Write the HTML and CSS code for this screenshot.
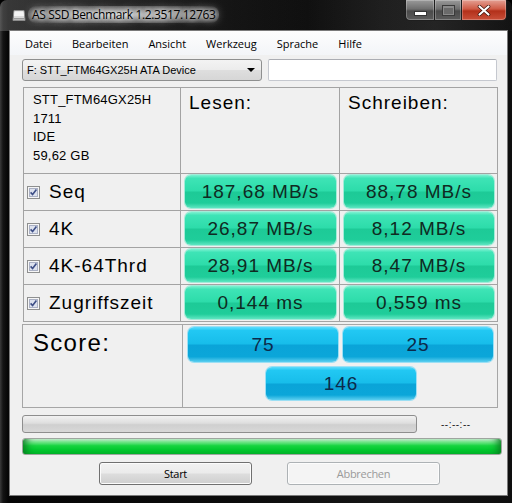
FILE: index.html
```html
<!DOCTYPE html>
<html lang="de">
<head>
<meta charset="utf-8">
<title>AS SSD Benchmark</title>
<link rel="stylesheet" href="styles.css">
</head>
<body>
<div class="window">
  <div class="titlebar">
    <svg class="app-icon" width="14" height="13" viewBox="0 0 14 13">
      <path d="M2 1.5 H12 L13 11.5 H1 Z" fill="#d9d9d9" stroke="#8c8c8c"/>
      <path d="M2.5 2.5 H11.5 L12 7 H2 Z" fill="#f4f4f4"/>
      <rect x="2" y="9" width="10" height="1.5" fill="#9a9a9a"/>
    </svg>
    <span class="title">AS SSD Benchmark 1.2.3517.12763</span>
    <div class="caps">
      <div class="cap cap-min"><span class="glyph-min"></span></div>
      <div class="cap cap-max"><span class="glyph-max"></span></div>
      <div class="cap cap-close">
        <svg width="14" height="11" viewBox="0 0 14 11"><path d="M2.5 1.5 L11.5 9.5 M11.5 1.5 L2.5 9.5" stroke="#3a1008" stroke-width="3.6" stroke-linecap="round"/><path d="M2.5 1.5 L11.5 9.5 M11.5 1.5 L2.5 9.5" stroke="#fff" stroke-width="2.2" stroke-linecap="round"/></svg>
      </div>
    </div>
  </div>
  <div class="client">
    <div class="menubar">
      <span>Datei</span><span>Bearbeiten</span><span>Ansicht</span><span>Werkzeug</span><span>Sprache</span><span>Hilfe</span>
    </div>
    <div class="drive-row">
      <div class="combo"><span>F: STT_FTM64GX25H ATA Device</span><span class="combo-arrow"></span></div>
      <div class="textbox"></div>
    </div>
    <div class="results">
      <div class="cell info">STT_FTM64GX25H<br>1711<br>IDE<br>59,62 GB</div>
      <div class="cell head">Lesen:</div>
      <div class="cell head">Schreiben:</div>

      <div class="cell label"><svg class="check" width="13" height="13" viewBox="0 0 13 13"><rect x="0.5" y="0.5" width="12" height="12" fill="#f6f6f6" stroke="#8e8f8f"/><rect x="2.5" y="2.5" width="8" height="8" fill="#dde2ee" stroke="#aab0c4"/><path d="M3.6 6.4 L5.6 8.6 L9.4 3.6" stroke="#3d4e86" stroke-width="1.6" fill="none"/></svg>Seq</div>
      <div class="cell val"><div class="bar green">187,68 MB/s</div></div>
      <div class="cell val"><div class="bar green">88,78 MB/s</div></div>

      <div class="cell label"><svg class="check" width="13" height="13" viewBox="0 0 13 13"><rect x="0.5" y="0.5" width="12" height="12" fill="#f6f6f6" stroke="#8e8f8f"/><rect x="2.5" y="2.5" width="8" height="8" fill="#dde2ee" stroke="#aab0c4"/><path d="M3.6 6.4 L5.6 8.6 L9.4 3.6" stroke="#3d4e86" stroke-width="1.6" fill="none"/></svg>4K</div>
      <div class="cell val"><div class="bar green">26,87 MB/s</div></div>
      <div class="cell val"><div class="bar green">8,12 MB/s</div></div>

      <div class="cell label"><svg class="check" width="13" height="13" viewBox="0 0 13 13"><rect x="0.5" y="0.5" width="12" height="12" fill="#f6f6f6" stroke="#8e8f8f"/><rect x="2.5" y="2.5" width="8" height="8" fill="#dde2ee" stroke="#aab0c4"/><path d="M3.6 6.4 L5.6 8.6 L9.4 3.6" stroke="#3d4e86" stroke-width="1.6" fill="none"/></svg>4K-64Thrd</div>
      <div class="cell val"><div class="bar green">28,91 MB/s</div></div>
      <div class="cell val"><div class="bar green">8,47 MB/s</div></div>

      <div class="cell label"><svg class="check" width="13" height="13" viewBox="0 0 13 13"><rect x="0.5" y="0.5" width="12" height="12" fill="#f6f6f6" stroke="#8e8f8f"/><rect x="2.5" y="2.5" width="8" height="8" fill="#dde2ee" stroke="#aab0c4"/><path d="M3.6 6.4 L5.6 8.6 L9.4 3.6" stroke="#3d4e86" stroke-width="1.6" fill="none"/></svg>Zugriffszeit</div>
      <div class="cell val"><div class="bar green">0,144 ms</div></div>
      <div class="cell val"><div class="bar green">0,559 ms</div></div>
    </div>
    <div class="score">
      <div class="cell score-label">Score:</div>
      <div class="cell score-vals">
        <div class="score-row">
          <div class="bar blue">75</div>
          <div class="bar blue">25</div>
        </div>
        <div class="score-row total">
          <div class="bar blue">146</div>
        </div>
      </div>
    </div>
    <div class="progress-row">
      <div class="progress gray"></div>
      <span class="time">--:--:--</span>
    </div>
    <div class="progress green-bar"></div>
    <div class="buttons">
      <div class="btn">Start</div>
      <div class="btn disabled">Abbrechen</div>
    </div>
  </div>
</div>
</body>
</html>
```
FILE: styles.css
```css
html, body {
  margin: 0;
  padding: 0;
  background: #000;
}

body {
  font-family: "Liberation Sans", Arial, sans-serif;
  color: #000;
}

.window {
  width: 512px;
  height: 503px;
  display: flex;
  flex-direction: column;
  background: linear-gradient(to right, #3a3a3a 0, #141414 3px, #050505 8px, #0b0b0b 45%, #151515 75%, #0e0e0e 100%);
  border-radius: 7px 7px 0 0;
  overflow: hidden;
}

/* title bar */
.titlebar {
  height: 31px;
  flex: none;
  display: flex;
  align-items: flex-start;
  padding-left: 12px;
  background: linear-gradient(to right, rgba(120,120,120,0.45), rgba(60,60,60,0.2) 45%, rgba(0,0,0,0) 60%, rgba(90,90,90,0.25) 85%, rgba(40,40,40,0.2));
}

.app-icon {
  margin-top: 9px;
  flex: none;
}

.title {
  margin-left: 2px;
  margin-top: 6px;
  padding: 0 4px;
  font-family: "Open Sans", "Liberation Sans", sans-serif;
  font-size: 12px;
  letter-spacing: -0.35px;
  color: #000;
  border-radius: 8px;
  background: radial-gradient(ellipse at center, rgba(235,235,235,0.75) 0%, rgba(200,200,200,0.45) 55%, rgba(120,120,120,0) 100%);
  text-shadow: 0 0 4px #fff, 0 0 8px #f0f0f0, 0 0 12px #d8d8d8;
}

.caps {
  margin-left: auto;
  margin-right: 5px;
  display: flex;
}

.cap {
  height: 21px;
  box-sizing: border-box;
  border: 1px solid #1e1e1e;
  border-top: none;
  display: flex;
  align-items: center;
  justify-content: center;
  box-shadow: inset 0 0 0 1px rgba(255,255,255,0.25);
}

.cap-min {
  width: 29px;
  border-radius: 0 0 0 5px;
  border-right: none;
  background: linear-gradient(#9a9a9a, #6e6e6e 45%, #4a4a4a 55%, #5c5c5c);
}

.cap-max {
  width: 27px;
  border-right: none;
  background: linear-gradient(#9a9a9a, #6e6e6e 45%, #4a4a4a 55%, #5c5c5c);
}

.cap-close {
  width: 46px;
  border-radius: 0 0 5px 0;
  background: linear-gradient(#e4a093, #cf5a45 45%, #b3301a 55%, #c9503a);
}

.glyph-min {
  width: 11px;
  height: 3px;
  margin-top: 6px;
  background: #fff;
  border: 1px solid #333;
}

.glyph-max {
  width: 9px;
  height: 6px;
  border: 1px solid #8a8a8a;
  border-top-width: 2px;
  background: #6a6a6a;
  box-shadow: 0 0 0 1px #3a3a3a;
}

/* client */
.client {
  margin: 0 5px 8px 10px;
  height: 464px;
  flex: none;
  background: #f0f0f0;
  display: flex;
  flex-direction: column;
  box-shadow: 0 0 0 1px #7a7a7a;
}

.menubar {
  height: 24px;
  flex: none;
  display: flex;
  align-items: center;
  padding-left: 5px;
  background: linear-gradient(#fdfdfd, #f3f5f8);
  font-family: "Open Sans", "Liberation Sans", sans-serif;
  font-size: 11px;
}

.menubar span {
  padding: 0 10px;
}

.drive-row {
  display: flex;
  gap: 6px;
  margin: 4px 0 0 12px;
  height: 22px;
}

.combo {
  width: 240px;
  box-sizing: border-box;
  border: 1px solid #8e8f8f;
  border-radius: 3px;
  background: linear-gradient(#f3f3f3, #ececec 48%, #dedede 52%, #d6d6d6);
  display: flex;
  align-items: center;
  justify-content: space-between;
  padding: 0 6px 0 4px;
  font-size: 11px;
}

.combo-arrow {
  width: 0;
  height: 0;
  border-left: 4px solid transparent;
  border-right: 4px solid transparent;
  border-top: 4px solid #000;
}

.textbox {
  width: 229px;
  box-sizing: border-box;
  background: #fff;
  border: 1px solid #c5c8cf;
  border-top-color: #abadb3;
  border-radius: 2px;
}

/* results table */
.results {
  align-self: flex-start;
  margin: 6px 0 0 13px;
  display: grid;
  grid-template-columns: 156px 158px 157px;
  grid-template-rows: 85px repeat(4, 36px);
  gap: 1px;
  padding: 1px;
  background: #a3a3a3;
}

.cell {
  background: #f0f0f0;
}

.info {
  padding: 3px 0 0 9px;
  font-size: 13px;
  line-height: 18.6px;
  letter-spacing: 0.2px;
}

.head {
  padding: 4px 0 0 8px;
  font-size: 19px;
  letter-spacing: 1px;
}

.label {
  display: flex;
  align-items: center;
  gap: 9px;
  padding-left: 3px;
  font-size: 19px;
  letter-spacing: 1px;
}

.check {
  flex: none;
}

.val {
  display: flex;
  padding: 1px 3px 2px 4px;
}

.bar {
  border-radius: 6px;
  display: flex;
  align-items: center;
  justify-content: center;
  font-size: 19px;
  letter-spacing: 1px;
}

.bar.green {
  flex: 1;
  color: #0f2a22;
  background: linear-gradient(#7ef2d2 0%, #3ee4b6 10%, #2ddcaa 48%, #1dca97 52%, #1fcd9a 85%, #5fe6c2 100%);
  box-shadow: 0 0 0 1px rgba(130, 232, 205, 0.7);
}

/* score */
.score {
  align-self: flex-start;
  margin: 2px 0 0 12px;
  display: grid;
  grid-template-columns: 159px 314px;
  height: 84px;
  box-sizing: border-box;
  gap: 1px;
  padding: 1px;
  background: #a6a6a6;
}

.score-label {
  padding: 4px 0 0 10px;
  font-size: 24px;
  letter-spacing: 1.3px;
}

.score-vals {
  display: flex;
  flex-direction: column;
  gap: 5px;
  padding: 2px 0 0 5px;
}

.score-row {
  display: flex;
  gap: 5px;
}

.bar.blue {
  width: 150px;
  height: 35px;
  color: #0c2a4a;
  background: linear-gradient(#5fdcfc 0%, #22c8f3 10%, #17bdea 48%, #0aa4d8 52%, #0ba6d9 85%, #5ccff0 100%);
  box-shadow: 0 0 0 1px rgba(120, 215, 245, 0.7);
}

.score-row.total {
  padding-left: 78px;
}

.score-row.total .bar.blue {
  height: 33px;
}

/* progress */
.progress-row {
  display: flex;
  align-items: center;
  margin: 7px 0 0 12px;
  height: 18px;
}

.progress {
  box-sizing: border-box;
  border-radius: 3px;
  border: 1px solid #8e8e8e;
}

.progress.gray {
  width: 395px;
  height: 18px;
  background: linear-gradient(#f2f2f2, #dedede 45%, #cfcfcf 55%, #d8d8d8);
}

.time {
  margin-left: 24px;
  font-size: 10px;
  letter-spacing: 0.5px;
  color: #222;
}

.progress.green-bar {
  margin: 5px 0 0 12px;
  width: 480px;
  height: 17px;
  border-color: #9fa59f;
  background: linear-gradient(#dcf9e2 0%, #7ee894 18%, #17d43f 45%, #03c92f 70%, #00bb29 100%);
  box-shadow: inset 9px 0 8px -6px #0a7a22, inset -9px 0 8px -6px #0a7a22;
}

/* buttons */
.buttons {
  display: flex;
  gap: 35px;
  margin: 7px 0 0 89px;
}

.btn {
  width: 153px;
  height: 23px;
  box-sizing: border-box;
  border: 1px solid #707070;
  border-radius: 3px;
  background: linear-gradient(#f2f2f2, #ebebeb 48%, #dddddd 52%, #cfcfcf);
  box-shadow: inset 0 0 0 1px #fcfcfc;
  display: flex;
  align-items: center;
  justify-content: center;
  font-family: "Open Sans", "Liberation Sans", sans-serif;
  font-size: 11px;
  letter-spacing: -0.3px;
}

.btn.disabled {
  border-color: #adb2b5;
  background: #f4f4f4;
  color: #9a9a9a;
}
```
